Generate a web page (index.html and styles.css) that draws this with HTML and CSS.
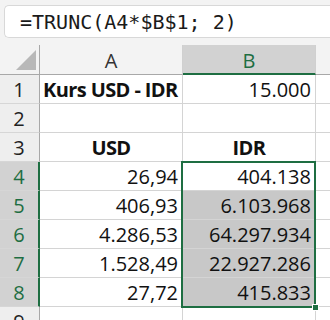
FILE: index.html
```html
<!DOCTYPE html>
<html lang="id">
<head>
<meta charset="utf-8">
<link rel="stylesheet" href="styles.css">
</head>
<body>
<div class="formula-bar"><span class="formula">=TRUNC(A4*$B$1; 2)</span></div>
<div class="sheet">
  <div class="grid">
    <div class="corner"><span class="corner-tri"></span></div>
    <div class="colhead">A</div>
    <div class="colhead sel">B</div>
    <div class="colhead"></div>

    <div class="rowhead">1</div>
    <div class="cell bold left">Kurs USD - IDR</div>
    <div class="cell num">15.000</div>
    <div class="cell"></div>

    <div class="rowhead">2</div>
    <div class="cell"></div>
    <div class="cell"></div>
    <div class="cell"></div>

    <div class="rowhead">3</div>
    <div class="cell bold center">USD</div>
    <div class="cell bold center">IDR</div>
    <div class="cell"></div>

    <div class="rowhead sel">4</div>
    <div class="cell num">26,94</div>
    <div class="cell num">404.138</div>
    <div class="cell"></div>

    <div class="rowhead sel">5</div>
    <div class="cell num">406,93</div>
    <div class="cell num shade">6.103.968</div>
    <div class="cell"></div>

    <div class="rowhead sel">6</div>
    <div class="cell num">4.286,53</div>
    <div class="cell num shade">64.297.934</div>
    <div class="cell"></div>

    <div class="rowhead sel">7</div>
    <div class="cell num">1.528,49</div>
    <div class="cell num shade">22.927.286</div>
    <div class="cell"></div>

    <div class="rowhead sel">8</div>
    <div class="cell num">27,72</div>
    <div class="cell num shade">415.833</div>
    <div class="cell"></div>

    <div class="rowhead">9</div>
    <div class="cell"></div>
    <div class="cell"></div>
    <div class="cell"></div>
  </div>
  <div class="selection"><span class="handle"></span></div>
</div>
</body>
</html>
```

FILE: styles.css
```css
* { box-sizing: border-box; }
html, body {
  margin: 0;
  padding: 0;
  background: #f3f3f3;
  overflow: hidden;
  width: 330px;
  height: 320px;
}
body {
  font-family: "Open Sans", "Noto Sans", sans-serif;
  color: #111;
}
.formula-bar {
  margin: 5px 0 0 4px;
  height: 33px;
  background: #fff;
  border: 1px solid #d8d8d8;
  border-right: none;
  border-radius: 5px 0 0 5px;
  display: flex;
  align-items: center;
  padding-left: 15px;
}
.formula {
  font-family: "DejaVu Sans Mono", monospace;
  font-size: 20px;
  color: #1a1a1a;
  line-height: 1;
}
.sheet {
  position: relative;
  margin-top: 7px;
  height: 275px;
  overflow: hidden;
}
.grid {
  display: grid;
  grid-template-columns: 40px 143px 133px 14px;
  grid-template-rows: 30px repeat(9, 29px);
  width: 330px;
}
.corner, .colhead, .rowhead, .cell {
  border-right: 1px solid #d4d4d4;
  border-bottom: 1px solid #d4d4d4;
  font-size: 20px;
  white-space: nowrap;
}
.grid > :nth-child(4n) { border-right: none; }
.corner {
  position: relative;
  background: #f3f3f3;
  border-right-color: #a8a8a8;
  border-bottom-color: #a8a8a8;
}
.corner-tri {
  position: absolute;
  right: 3px;
  bottom: 4px;
  width: 0;
  height: 0;
  border-left: 20px solid transparent;
  border-bottom: 20px solid #b8b8b8;
}
.colhead {
  background: #f3f3f3;
  border-right-color: #d0d0d0;
  border-bottom-color: #a8a8a8;
  display: flex;
  align-items: center;
  justify-content: center;
  color: #333;
  line-height: 20px;
  padding-top: 2px;
}
.colhead.sel {
  background: #d2d2d2;
  color: #1e6e42;
  border-bottom: 2px solid #1e6e42;
  padding-top: 3px;
}
.rowhead {
  background: #eeeeee;
  border-right-color: #a8a8a8;
  border-bottom-color: #d6d6d6;
  display: flex;
  align-items: flex-end;
  justify-content: center;
  line-height: 20px;
  padding-bottom: 3px;
  padding-right: 1px;
  color: #222;
}
.rowhead.sel {
  background: #d2d2d2;
  color: #1e6e42;
  border-right: 2px solid #1e6e42;
  padding-right: 0;
}
.cell {
  background: #fff;
  display: flex;
  align-items: flex-end;
  line-height: 20px;
  padding: 0 4px 3px 4px;
}
.cell.num { justify-content: flex-end; }
.cell.left { justify-content: flex-start; padding-left: 3px; }
.cell.center { justify-content: center; }
.cell.bold { font-weight: 700; letter-spacing: -0.6px; }
.cell.shade { background: #c8c8c8; }
.selection {
  position: absolute;
  left: 181px;
  top: 116px;
  width: 135px;
  height: 147px;
  border: 2px solid #1e6e42;
  pointer-events: none;
}
.handle {
  position: absolute;
  right: -5px;
  bottom: -5px;
  width: 7px;
  height: 7px;
  background: #1e6e42;
  border: 1px solid #fff;
}
```
